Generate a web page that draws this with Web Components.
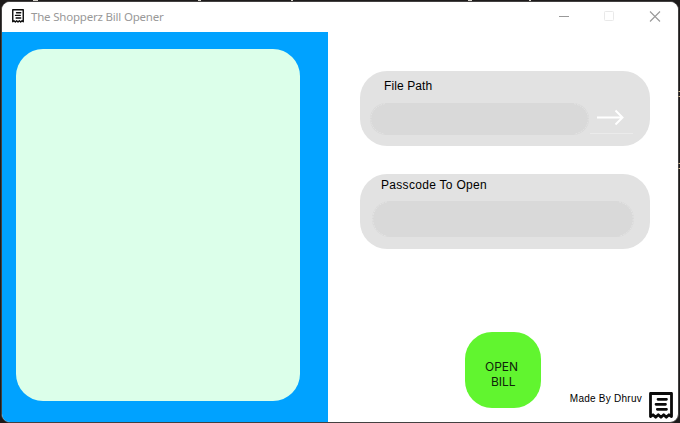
<!DOCTYPE html>
<html lang="en">
<head>
<meta charset="utf-8">
<title>The Shopperz Bill Opener</title>
<style>
html,body{margin:0;height:100%;overflow:hidden;background:#1d1b1b}
body{font-family:"Liberation Sans",Arial,sans-serif;color:#000}
</style>
</head>
<body>
<desktop-specks></desktop-specks>
<bill-window></bill-window>
<script>
const define = (name, html) => customElements.define(name, class extends HTMLElement {
  constructor() {
    super();
    this.attachShadow({ mode: 'open' }).innerHTML = html;
  }
});

// Slivers of the desktop that show round the window's edge.
define('desktop-specks', `
<style>:host{position:absolute;inset:0;pointer-events:none}svg{display:block}</style>
<svg width="680" height="423" fill="none" stroke="#d8d4cc">
  <path d="M33 .5h5M198 .5h3M291 .5h2M468 .5h4M529 .5h2" stroke-width="1"/>
  <path d="M678.500 91.500H680M678.500 96.500H680M678.500 163.500H680M678.500 168.500H680" stroke="#c9b58c"/>
</svg>`);

define('receipt-icon', `
<style>:host{display:block;flex:none}svg{display:block;width:100%;height:100%}</style>
<svg viewBox="0 0 24 27" preserveAspectRatio="none" fill="none" stroke="#0b0b0b">
  <path d="M1.500 24.500V1.500H22.500V24.500L20 22.800L17.300 25.200L14.700 22.800L12 25.200L9.300 22.800L6.700 25.200L4 22.800Z" stroke-width="2.800" stroke-linejoin="round"/>
  <path d="M9 7.300H17.500M7 12.300H16.500M8.300 17.300H17.500" stroke-width="2.700" stroke-linecap="round"/>
</svg>`);

define('title-bar', `
<style>
:host{display:flex;height:30px;box-sizing:border-box;padding:0 17px 2px 10px;align-items:center;background:#fff}
receipt-icon{width:12px;height:14px}
span{font:11.500px/16px "Noto Sans","Open Sans",sans-serif;color:#999;margin:2px auto 0 7px;white-space:nowrap;letter-spacing:-.2px}
svg{display:block;width:102px;height:12px;flex:none;margin-top:1px}
</style>
<receipt-icon></receipt-icon><span>The Shopperz Bill Opener</span>
<svg viewBox="0 0 102 12" fill="none">
  <path d="M0 5.500H10" stroke="#999"/>
  <rect x="45.500" y=".5" width="9" height="9" rx=".8" stroke="#e9e9e9"/>
  <path d="M91 .5L101 10.500M101 .5L91 10.500" stroke="#999" stroke-width="1.100"/>
</svg>`);

define('preview-pane', `
<style>
:host{display:block;width:326px;box-sizing:border-box;padding:17px 28px 21px 14px;background:#00a2ff}
div{height:100%;border-radius:27px;background:#dcffea}
</style><div></div>`);

define('field-card', `
<style>
:host{display:block;width:290px;height:75px;box-sizing:border-box;border-radius:27px;background:#e2e2e2;padding:var(--pad)}
label{display:block;font-size:12px;line-height:14px;letter-spacing:var(--spacing);padding-left:var(--indent);white-space:nowrap}
.row{display:flex;margin-top:var(--gap)}
.input{display:flex;justify-content:space-between;width:var(--w);height:var(--h);flex:none;border-radius:18px;background:#d9d9d9}
svg{display:block;width:16px;height:100%}
svg + svg{transform:scaleX(-1)}
</style>
<label><slot></slot></label>
<div class="row">
  <div class="input">
    <svg viewBox="0 0 16 36" preserveAspectRatio="none" fill="none" stroke="#e6e6e6" stroke-width=".8" stroke-dasharray="2 1"><path d="M15 .8C-4 5-4 31 15 35.200"/></svg>
    <svg viewBox="0 0 16 36" preserveAspectRatio="none" fill="none" stroke="#e6e6e6" stroke-width=".8" stroke-dasharray="2 1"><path d="M15 .8C-4 5-4 31 15 35.200"/></svg>
  </div>
  <slot name="action"></slot>
</div>`);

define('browse-button', `
<style>:host{display:block;width:44px;height:32px;margin-left:1px}svg{display:block}</style>
<svg width="44" height="32" fill="none">
  <path d="M7 14.500H33M25.500 7.500L32.500 14.500L25.500 21.500" stroke="#fff" stroke-width="2"/>
  <path d="M0 30.500H43" stroke="#ebebeb"/>
</svg>`);

define('open-button', `
<style>
:host{display:block;width:76px;height:76px;box-sizing:border-box;padding:27px 0 0 20px;border-radius:27px;background:#61f52f;color:#10240a;font:12px/15px Inter,sans-serif;white-space:nowrap}
span{display:block}
span + span{padding-left:6px}
</style><span>OPEN</span><span>BILL</span>`);

define('page-credit', `
<style>
:host{display:flex;align-items:flex-start}
span{font-size:10px;line-height:12px;margin:1px 7px 0 0;white-space:nowrap;letter-spacing:.25px}
receipt-icon{width:24px;height:27px}
</style><span><slot></slot></span><receipt-icon></receipt-icon>`);

define('bill-window', `
<style>
:host{display:flex;flex-direction:column;width:678px;height:422px;box-sizing:border-box;border:1px solid #434141;margin:1px;border-radius:9px;overflow:hidden;background:#fff}
main{display:flex;height:390px}
section{flex:1;display:grid;grid-template-columns:291px 1fr;grid-template-rows:39px 75px 28px 75px 83px 76px 1fr;padding-left:31.500px}
.path{grid-area:2/1;--pad:8px 0 0 10.500px;--indent:14px;--gap:10px;--w:219px;--h:32px;--spacing:.1px}
.pass{grid-area:4/1;--pad:4px 0 0 12.500px;--indent:9px;--gap:9px;--w:262px;--h:36px;--spacing:.3px}
open-button{grid-area:6/1;margin-left:105.500px}
page-credit{grid-area:6/1/8/3;justify-self:end;margin:60px 5px 0 0}
</style>
<title-bar></title-bar>
<main>
  <preview-pane></preview-pane>
  <section>
    <field-card class="path">File Path<browse-button slot="action"></browse-button></field-card>
    <field-card class="pass">Passcode To Open</field-card>
    <open-button></open-button>
    <page-credit>Made By Dhruv</page-credit>
  </section>
</main>`);
</script>
</body>
</html>
